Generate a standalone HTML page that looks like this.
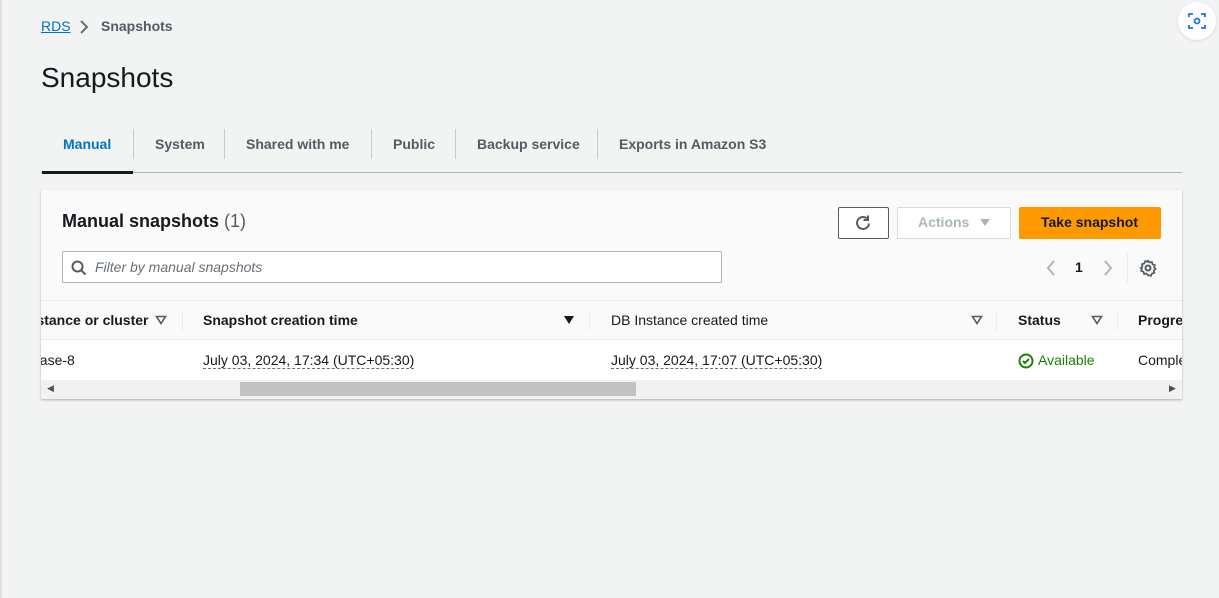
<!DOCTYPE html>
<html><head><style>
*{box-sizing:border-box;margin:0;padding:0}
body{width:1219px;height:598px;background:#f2f3f3;font-family:"Liberation Sans",sans-serif;position:relative;overflow:hidden;color:#16191f}
.abs{position:absolute;white-space:nowrap}
.lb{position:absolute;left:0;top:0;width:2px;height:598px;background:#e0e0e0}
.tab{position:absolute;top:136px;font-size:14px;font-weight:bold;color:#545b64}
.sep{position:absolute;top:129px;width:1px;height:30px;background:#c5cbd1}
.card{position:absolute;left:41px;top:190px;width:1141px;height:209px;background:#fafafa;box-shadow:0 1px 2px rgba(0,22,40,.3);overflow:hidden}
.th{position:absolute;top:110px;left:0;width:1141px;height:40px;background:#fafafa;border-top:1px solid #eaeded;border-bottom:1px solid #eaeded}
.tr{position:absolute;top:150px;left:0;width:1141px;height:40px;background:#fff}
.sb{position:absolute;top:190px;left:0;width:1141px;height:19px;background:#f1f1f1}
.h{position:absolute;top:11px;font-size:14px;font-weight:bold;color:#16191f}
.c{position:absolute;top:12px;font-size:14px;color:#16191f}
.dot{border-bottom:1px dashed #687078}
.vs{position:absolute;top:10px;width:1px;height:20px;background:#eaeded}
.tri{position:absolute;top:13px}
</style></head><body>
<div class="lb"></div>
<div class="abs" style="left:41px;top:18px;font-size:14px;color:#0073bb;text-decoration:underline">RDS</div>
<svg class="abs" style="left:79px;top:20px" width="10" height="14" viewBox="0 0 10 14"><path d="M2 1l6 6-6 6" fill="none" stroke="#687078" stroke-width="2"/></svg>
<div class="abs" style="left:101px;top:18px;font-size:14px;font-weight:bold;color:#545b64">Snapshots</div>
<div class="abs" style="left:41px;top:62px;font-size:28px;color:#16191f">Snapshots</div>
<div class="tab" style="left:63px;color:#0073bb">Manual</div>
<div class="sep" style="left:133px"></div>
<div class="tab" style="left:155px">System</div>
<div class="sep" style="left:224px"></div>
<div class="tab" style="left:246px">Shared with me</div>
<div class="sep" style="left:371px"></div>
<div class="tab" style="left:393px">Public</div>
<div class="sep" style="left:455px"></div>
<div class="tab" style="left:477px">Backup service</div>
<div class="sep" style="left:597px"></div>
<div class="tab" style="left:619px">Exports in Amazon S3</div>
<div class="abs" style="left:41px;top:172px;width:1141px;height:1px;background:#aab7b8"></div>
<div class="abs" style="left:42px;top:171px;width:91px;height:3px;background:#16191f"></div>
<div class="abs" style="left:1178px;top:2px;width:38px;height:38px;border-radius:50%;background:#fff;box-shadow:0 1px 3px rgba(0,0,0,.1)"></div>
<svg class="abs" style="left:1187px;top:11px" width="20" height="20" viewBox="0 0 20 20"><path d="M2 6V3h4M14 3h4v3M18 14v3h-4M6 17H2v-3" fill="none" stroke="#1a73e8" stroke-width="1.8"/><circle cx="10" cy="10" r="2.5" fill="none" stroke="#1a73e8" stroke-width="1.8"/></svg>
<div class="card">
 <div class="abs" style="left:21px;top:21px;font-size:18px;font-weight:bold">Manual snapshots <span style="font-weight:normal;color:#545b64">(1)</span></div>
 <div class="abs" style="left:797px;top:17px;width:51px;height:32px;border:1px solid #545b64;border-radius:2px;background:#fff"></div>
 <svg class="abs" style="left:813px;top:24px" width="18" height="18" viewBox="0 0 18 18"><path d="M15 9.5A6 6 0 1 1 12.8 4.3" fill="none" stroke="#545b64" stroke-width="2"/><path d="M14 1.5v4.5h-4.5" fill="none" stroke="#545b64" stroke-width="2"/></svg>
 <div class="abs" style="left:856px;top:17px;width:114px;height:32px;border:1px solid #d5dbdb;border-radius:2px;background:#fff"></div>
 <div class="abs" style="left:877px;top:24px;font-size:14px;font-weight:bold;color:#aab7b8">Actions</div>
 <svg class="abs" style="left:938px;top:28px" width="12" height="10" viewBox="0 0 12 10"><path d="M1 1h10L6 8z" fill="#aab7b8"/></svg>
 <div class="abs" style="left:978px;top:17px;width:142px;height:32px;background:#ff9900;border-radius:2px"></div>
 <div class="abs" style="left:1000px;top:24px;font-size:14px;font-weight:bold;color:#16191f">Take snapshot</div>
 <div class="abs" style="left:21px;top:61px;width:660px;height:32px;border:1px solid #aab7b8;border-radius:2px;background:#fff"></div>
 <svg class="abs" style="left:30px;top:70px" width="16" height="16" viewBox="0 0 16 16"><circle cx="6.5" cy="6.5" r="5" fill="none" stroke="#545b64" stroke-width="2"/><path d="M10 10l4.5 4.5" stroke="#545b64" stroke-width="2"/></svg>
 <div class="abs" style="left:54px;top:69px;font-size:14px;font-style:italic;color:#687078">Filter by manual snapshots</div>
 <svg class="abs" style="left:1004px;top:70px" width="12" height="16" viewBox="0 0 12 16"><path d="M9 1L3 8l6 7" fill="none" stroke="#aab7b8" stroke-width="2"/></svg>
 <div class="abs" style="left:1034px;top:69px;font-size:14px;font-weight:bold">1</div>
 <svg class="abs" style="left:1061px;top:70px" width="12" height="16" viewBox="0 0 12 16"><path d="M3 1l6 7-6 7" fill="none" stroke="#aab7b8" stroke-width="2"/></svg>
 <div class="abs" style="left:1086px;top:63px;width:1px;height:30px;background:#eaeded"></div>
 <svg class="abs" style="left:1098px;top:69px" width="18" height="18" viewBox="0 0 18 18"><circle cx="9" cy="9" r="2.5" fill="none" stroke="#545b64" stroke-width="2"/><path d="M9 1.5l1.5 2 2.4-.6.6 2.4 2.4.8-.8 2.3 1.6 1.6-2 1.5.6 2.4-2.4.6-.8 2.4-2.3-.8L9 16.5l-1.5-2-2.4.6-.6-2.4-2.4-.8.8-2.3L1.5 9l2-1.5-.6-2.4 2.4-.6.8-2.4 2.3.8z" fill="none" stroke="#545b64" stroke-width="1.7" stroke-linejoin="round"/></svg>
 <div class="th">
  <div class="h" style="left:-17px">Instance or cluster</div>
  <svg class="tri" style="left:114px" width="12" height="12" viewBox="0 0 12 12"><path d="M1.5 2.5h9L6 9.5z" fill="none" stroke="#545b64" stroke-width="1.6"/></svg>
  <div class="vs" style="left:141px"></div>
  <div class="h" style="left:162px">Snapshot creation time</div>
  <svg class="tri" style="left:522px" width="12" height="12" viewBox="0 0 12 12"><path d="M1 2h10L6 10z" fill="#16191f"/></svg>
  <div class="vs" style="left:548px"></div>
  <div class="h" style="left:570px;font-weight:normal;color:#16191f">DB Instance created time</div>
  <svg class="tri" style="left:930px" width="12" height="12" viewBox="0 0 12 12"><path d="M1.5 2.5h9L6 9.5z" fill="none" stroke="#545b64" stroke-width="1.6"/></svg>
  <div class="vs" style="left:955px"></div>
  <div class="h" style="left:977px">Status</div>
  <svg class="tri" style="left:1050px" width="12" height="12" viewBox="0 0 12 12"><path d="M1.5 2.5h9L6 9.5z" fill="none" stroke="#545b64" stroke-width="1.6"/></svg>
  <div class="vs" style="left:1076px"></div>
  <div class="h" style="left:1097px">Progress</div>
 </div>
 <div class="tr">
  <div class="c" style="left:-9px">base-8</div>
  <div class="c dot" style="left:162px">July 03, 2024, 17:34 (UTC+05:30)</div>
  <div class="c dot" style="left:570px">July 03, 2024, 17:07 (UTC+05:30)</div>
  <svg class="abs" style="left:977px;top:13px" width="16" height="16" viewBox="0 0 16 16"><circle cx="8" cy="8" r="6.5" fill="none" stroke="#1d8102" stroke-width="2"/><path d="M5 8l2 2 4-4" fill="none" stroke="#1d8102" stroke-width="2"/></svg>
  <div class="c" style="left:997px;color:#1d8102">Available</div>
  <div class="c" style="left:1097px">Completed</div>
 </div>
 <div class="sb">
  <div class="abs" style="left:199px;top:2px;width:396px;height:14px;background:#c1c1c1"></div>
  <div class="abs" style="left:6px;top:3px;font-size:9px;color:#505050">◀</div>
  <div class="abs" style="left:1128px;top:3px;font-size:9px;color:#505050">▶</div>
 </div>
</div>
</body></html>
